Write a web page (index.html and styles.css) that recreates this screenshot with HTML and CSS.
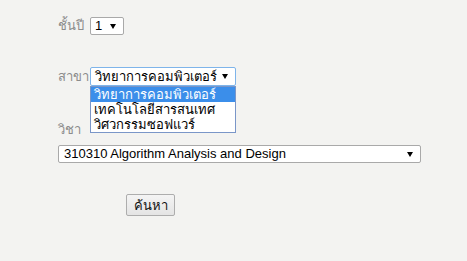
FILE: index.html
```html
<html>
<head>
    <title>ค้นหารายวิชา</title>
<link rel="stylesheet" href="styles.css">
</head>
<body>
<div class="form">
    <div class="row r1">
        <span class="label">ชั้นปี</span>
        <div class="sel sel-year">1<span class="arrow"></span></div>
    </div>

    <div class="row r2">
        <span class="label">สาขา</span>
        <div class="sel-wrap">
            <div class="sel sel-major focus">วิทยาการคอมพิวเตอร์<span class="arrow"></span></div>
            <!-- the opened list of the select -->
            <ul class="options">
                <li class="picked">วิทยาการคอมพิวเตอร์</li>
                <li>เทคโนโลยีสารสนเทศ</li>
                <li>วิศวกรรมซอฟแวร์</li>
            </ul>
        </div>
    </div>

    <div class="label subj">วิชา</div>
    <div class="sel sel-subject">310310 Algorithm Analysis and Design<span class="arrow"></span></div>

    <div class="actions">
        <button type="button" class="btn">ค้นหา</button>
    </div>
</div>
</body>
</html>
```

FILE: styles.css
```css
body
{
margin:0;
background:#f3f3f1;
font-family:Tahoma, "DejaVu Sans", "Liberation Sans", sans-serif;
font-size:13px;
}

.form
{
padding:17px 0 0 58px;
}

.row
{
display:flex;
align-items:center;
}

.r2
{
margin-top:32px;
}

.label
{
width:32px;
color:#8c8c8c;
font-size:13px;
line-height:16px;
}

.subj
{
margin-top:36px;
}

.sel
{
position:relative;
box-sizing:border-box;
background:#fff;
border:1px solid #a9a9a9;
border-radius:2px;
color:#000;
font-family:"Liberation Sans", "DejaVu Sans", sans-serif;
font-size:13px;
line-height:16px;
padding-left:4px;
white-space:nowrap;
}

.arrow
{
position:absolute;
right:7px;
top:6px;
width:0;
height:0;
border-left:3.5px solid transparent;
border-right:3.5px solid transparent;
border-top:5px solid #000;
}

.sel-year
{
width:34px;
height:18px;
}

.sel-wrap
{
position:relative;
}

.sel-major
{
width:146px;
height:19px;
padding-top:1px;
}

.focus
{
border-color:#7eb4ea;
}

.options
{
position:absolute;
left:0;
top:19px;
margin:0;
padding:0;
list-style:none;
box-sizing:border-box;
width:146px;
background:#fff;
border:1px solid #7a96c8;
font-family:"Liberation Sans", "DejaVu Sans", sans-serif;
font-size:13px;
}

.options li
{
height:15px;
line-height:15px;
padding-left:3px;
white-space:nowrap;
}

.options .picked
{
background:#3b8eea;
color:#fff;
}

.sel-subject
{
margin-top:7px;
width:363px;
height:18px;
padding-left:5px;
}

.actions
{
margin:31px 0 0 68px;
}

.btn
{
width:49px;
height:22px;
padding:0;
background:linear-gradient(#f4f4f4, #e4e4e4);
border:1px solid #adadad;
border-radius:2px;
color:#111;
font-family:Tahoma, "DejaVu Sans", sans-serif;
font-size:13px;
}
```
